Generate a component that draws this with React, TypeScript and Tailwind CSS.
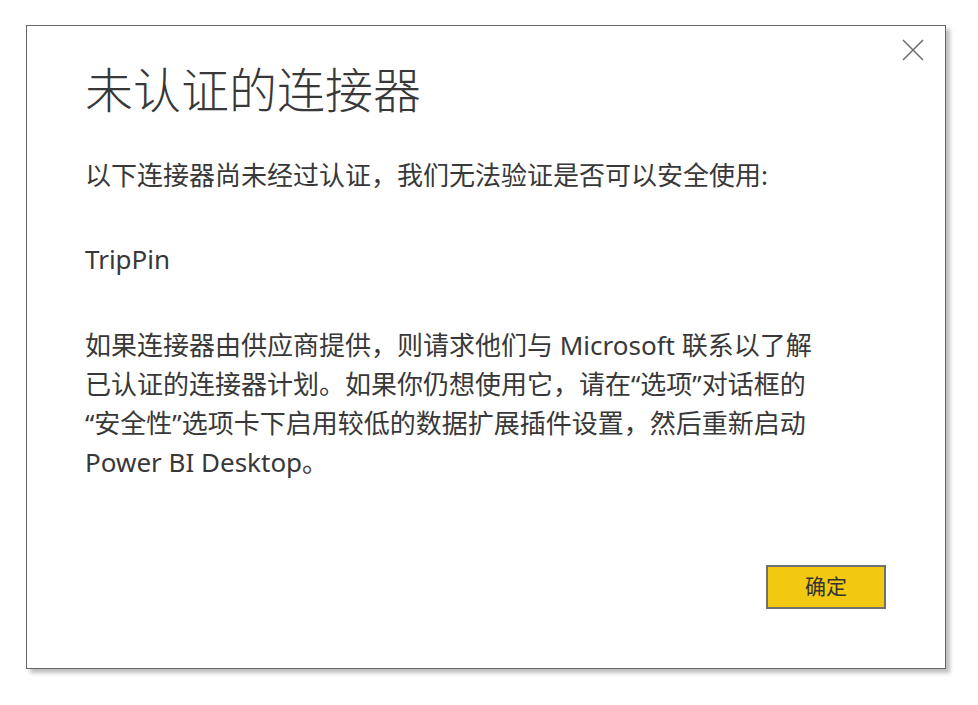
const font = "font-['Noto_Sans','Noto_Sans_CJK_SC',sans-serif]";

export default function App() {
  return (
    <div className={`min-h-[705px] w-full bg-white pl-[26px] pt-[25px] ${font}`}>
      {/* Dialog */}
      <div className="relative flex h-[644px] w-[920px] flex-col border border-[#666666] bg-white pl-[58px] pr-[59px] pt-[32px] pb-[59px] shadow-[4px_4px_4px_rgba(0,0,0,0.25)]">
        <button className="absolute right-[21px] top-[13px] h-[22px] w-[22px] text-[#6b6b6b]">
          <svg viewBox="0 0 22 22" className="h-[22px] w-[22px]" fill="none" stroke="currentColor" strokeWidth="1.5">
            <path d="M1 1L21 21M21 1L1 21" />
          </svg>
        </button>

        <h1 className="text-[48px] font-light leading-[64px] text-[#383838]">未认证的连接器</h1>

        <p className="mt-[34px] text-[26px] leading-[39px] text-[#383838]">
          以下连接器尚未经过认证，我们无法验证是否可以安全使用:
        </p>

        <p className="mt-[45px] text-[26px] leading-[39px] text-[#383838]">TripPin</p>

        <p className="mt-[47px] text-[26px] leading-[39px] text-[#383838]">
          如果连接器由供应商提供，则请求他们与 Microsoft 联系以了解
          <br />
          已认证的连接器计划。如果你仍想使用它，请在“选项”对话框的
          <br />
          “安全性”选项卡下启用较低的数据扩展插件设置，然后重新启动
          <br />
          Power BI Desktop。
        </p>

        <div className="flex-1" />

        <div className="flex justify-end">
          <button className="flex h-[44px] w-[120px] items-center justify-center border-2 border-[#707070] bg-[#f2c811] text-[21px] text-[#333333]">
            确定
          </button>
        </div>
      </div>
    </div>
  );
}
